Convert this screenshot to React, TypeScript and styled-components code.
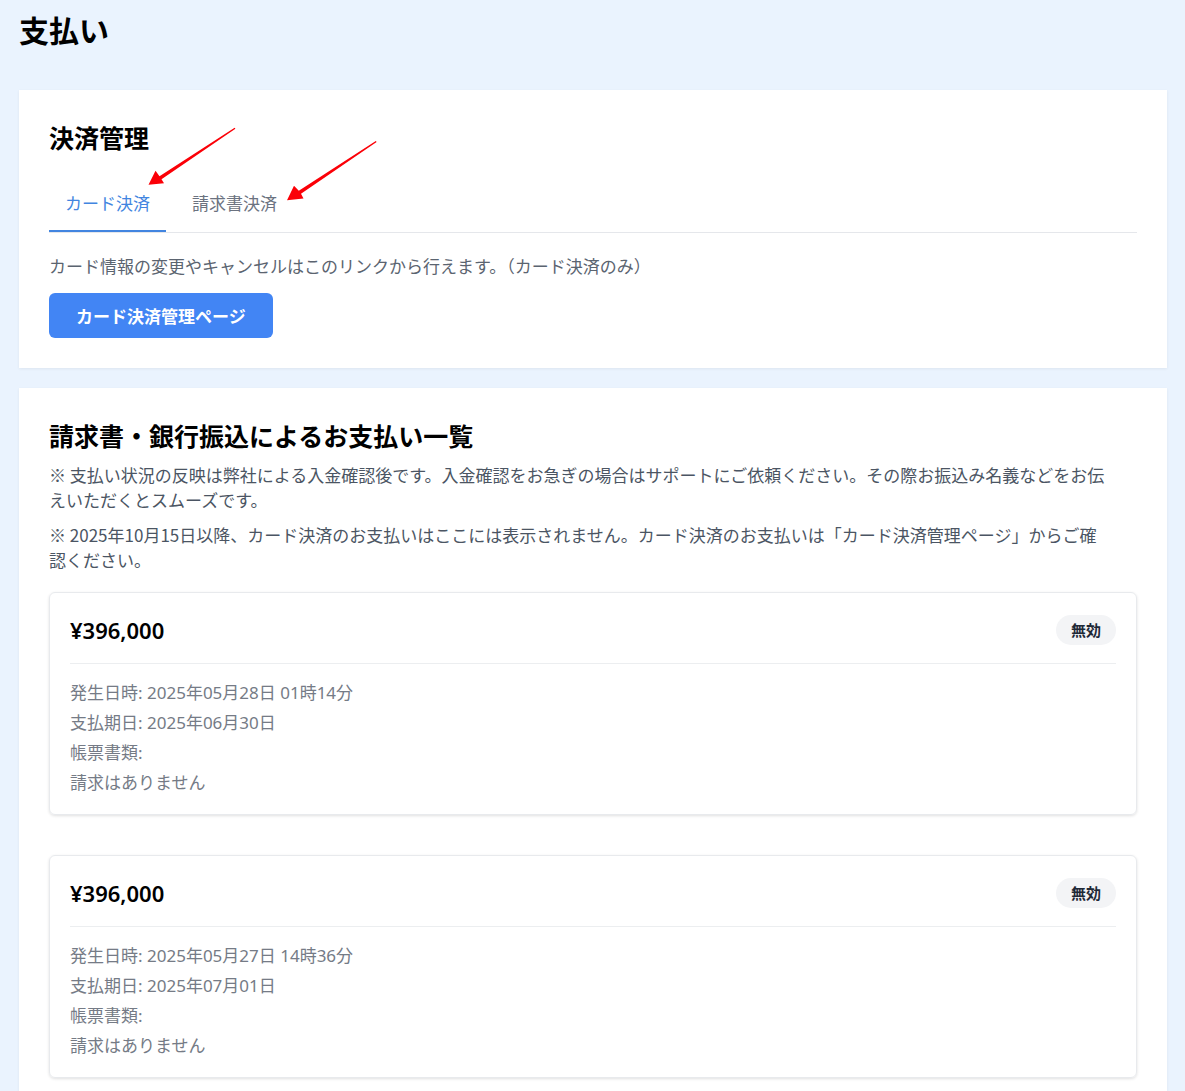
import { useState } from "react";
import styled, { createGlobalStyle } from "styled-components";

const payments = [
    { amount: "¥396,000", status: "無効", issued: "2025年05月28日 01時14分", due: "2025年06月30日" },
    { amount: "¥396,000", status: "無効", issued: "2025年05月27日 14時36分", due: "2025年07月01日" },
];

const GlobalStyle = createGlobalStyle`
    * {
        box-sizing: border-box;
    }

    body {
        margin: 0;
        background-color: #eaf3fe;
        color: #000;
        font-family: "Noto Sans CJK JP", "Noto Sans", sans-serif;
        font-size: 17px;
        line-height: 25px;
    }

    h1, h2, h3, p {
        margin: 0;
    }
`;

const Page = styled.main`
    display: flex;
    flex-direction: column;
    gap: 20px;
    padding: 0 18px 0 19px;
`;

const Title = styled.h1`
    font-size: 30px;
    line-height: 40px;
    padding: 9px 0 21px;
`;

const Panel = styled.section`
    position: relative;
    padding: 30px;
    background-color: #fff;
    box-shadow: 0 1px 3px rgba(0, 0, 0, 0.06);
`;

const Heading = styled.h2`
    font-size: 25px;
    line-height: 34px;
`;

const Tabs = styled.div`
    display: flex;
    gap: 10px;
    margin: 22px 0 20px;
    border-bottom: 1px solid #e5e7eb;
`;

const Tab = styled.button<{ $active: boolean }>`
    padding: 14px 16px 15px;
    border: none;
    border-bottom: 2px solid ${(props) => (props.$active ? "#4285e0" : "transparent")};
    background: none;
    color: ${(props) => (props.$active ? "#4285e0" : "#6b7280")};
    font: inherit;
    cursor: pointer;
`;

const Lead = styled.p`
    color: #5b6470;
`;

const LinkButton = styled.a`
    display: inline-block;
    margin-top: 15px;
    padding: 10px 27px;
    border-radius: 6px;
    background-color: #4285f4;
    color: #fff;
    font-weight: 700;
    text-decoration: none;
    vertical-align: top;
`;

const Note = styled.p`
    margin-top: 10px;
    color: #4b5563;
`;

const List = styled.div`
    display: flex;
    flex-direction: column;
    gap: 40px;
    margin-top: 20px;
`;

const Item = styled.article`
    padding: 20px 20px 16px;
    border: 1px solid #e8eaed;
    border-radius: 6px;
    box-shadow: 0 1px 3px rgba(0, 0, 0, 0.12);
`;

const ItemHeader = styled.header`
    display: flex;
    justify-content: space-between;
    align-items: center;
    padding: 2px 0 18px;
    border-bottom: 1px solid #eceef0;
`;

const Amount = styled.h3`
    font-family: "Noto Sans", "Noto Sans CJK JP", sans-serif;
    font-size: 22px;
    font-weight: 600;
    line-height: 30px;
`;

const Badge = styled.span`
    padding: 0 15px;
    border-radius: 15px;
    background-color: #f3f4f6;
    color: #1f2937;
    font-size: 15px;
    font-weight: 700;
    line-height: 30px;
`;

const Details = styled.div`
    padding-top: 14px;
    color: #757b86;
    font-family: "Noto Sans", "Noto Sans CJK JP", sans-serif;
    line-height: 30px;
`;

const Arrows = styled.svg`
    position: absolute;
    top: 30px;
    left: 120px;
    pointer-events: none;
`;

export default function App(){
    const [tab, setTab] = useState("card");

    return(
        <>
            <GlobalStyle/>
            <Page lang="ja">
                <Title>支払い</Title>
                <Panel>
                    <Heading>決済管理</Heading>
                    <Tabs role="tablist">
                        <Tab role="tab" aria-selected={tab === "card"} $active={tab === "card"} onClick={() => setTab("card")}>カード決済</Tab>
                        <Tab role="tab" aria-selected={tab === "invoice"} $active={tab === "invoice"} onClick={() => setTab("invoice")}>請求書決済</Tab>
                    </Tabs>
                    <Lead>カード情報の変更やキャンセルはこのリンクから行えます。（カード決済のみ）</Lead>
                    <LinkButton href="#card">カード決済管理ページ</LinkButton>
                    <Arrows width="250" height="90" viewBox="139 120 250 90" fill="#fb0007" aria-hidden="true">
                        <path d="M234.600 127.800L235.400 128.800L161.500 179.200L164 183.300L148.500 184.700L155.500 170.800L159.500 176.200Z"/>
                        <path d="M375.800 141L376.600 142L301 193.700L303.500 198.500L287 200.200L294 185.800L298.800 190.700Z"/>
                    </Arrows>
                </Panel>
                <Panel>
                    <Heading>請求書・銀行振込によるお支払い一覧</Heading>
                    <Note>
                        ※ 支払い状況の反映は弊社による入金確認後です。入金確認をお急ぎの場合はサポートにご依頼ください。その際お振込み名義などをお伝<br/>えいただくとスムーズです。
                    </Note>
                    <Note>
                        ※ 2025年10月15日以降、カード決済のお支払いはここには表示されません。カード決済のお支払いは「カード決済管理ページ」からご確<br/>認ください。
                    </Note>
                    <List>
                        {payments.map((payment) => (
                            <Item key={payment.issued}>
                                <ItemHeader>
                                    <Amount>{payment.amount}</Amount>
                                    <Badge>{payment.status}</Badge>
                                </ItemHeader>
                                <Details>
                                    <p>発生日時: {payment.issued}</p>
                                    <p>支払期日: {payment.due}</p>
                                    <p>帳票書類:</p>
                                    <p>請求はありません</p>
                                </Details>
                            </Item>
                        ))}
                    </List>
                </Panel>
            </Page>
        </>
    )
}
